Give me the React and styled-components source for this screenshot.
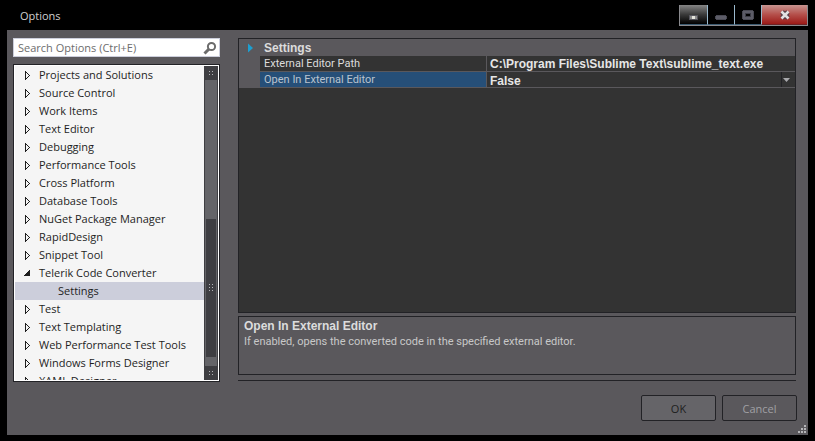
import React, { useState } from "react";
import styled, { createGlobalStyle } from "styled-components";

const items = [
  "Projects and Solutions",
  "Source Control",
  "Work Items",
  "Text Editor",
  "Debugging",
  "Performance Tools",
  "Cross Platform",
  "Database Tools",
  "NuGet Package Manager",
  "RapidDesign",
  "Snippet Tool",
  "Telerik Code Converter",
  "Settings",
  "Test",
  "Text Templating",
  "Web Performance Test Tools",
  "Windows Forms Designer",
  "XAML Designer"
];

const OPENED = "Telerik Code Converter";
const CHILD = "Settings";

const Arrow = ({ open }) => (
  <svg width="8" height="9" fill="#1e1e1e" shapeRendering="crispEdges">
    {open ? (
      <path d="M5 1h1v6h-6v-1h1v-1h1v-1h1v-1h1v-1h1z" />
    ) : (
      <path d="M1 0h1v9h-1zM2 1h1v1h-1zM3 2h1v1h-1zM4 3h1v1h-1zM5 4h1v1h-1zM4 5h1v1h-1zM3 6h1v1h-1zM2 7h1v1h-1z" />
    )}
  </svg>
);

const Dots = ({ rows = 2 }) => (
  <svg width="4" height={rows * 3 - 1} shapeRendering="crispEdges">
    {[...Array(rows)].map((_, i) => (
      <g key={i} fill="#b4b4b8">
        <rect x="0" y={i * 3} width="1" height="1" />
        <rect x="3" y={i * 3} width="1" height="1" />
      </g>
    ))}
  </svg>
);

const App = () => {
  const [search, setSearch] = useState("");
  const [selected, setSelected] = useState(CHILD);
  const [path, setPath] = useState(
    "C:\\Program Files\\Sublime Text\\sublime_text.exe"
  );
  const [external, setExternal] = useState("False");

  return (
    <Window>
      <GlobalStyle />
      <TitleBar>
        <Title>Options</Title>
        <Caption>
          <CaptionBtn kind="tray" aria-label="Tray">
            <svg width="9" height="5" shapeRendering="crispEdges">
              <rect width="9" height="5" fill="#55555c" />
              <rect x="1" y="1" width="7" height="3" fill="#8d8d8d" />
              <rect x="3" y="1" width="3" height="3" fill="#e4e4dc" />
            </svg>
          </CaptionBtn>
          <CaptionBtn aria-label="Minimize">
            <svg width="12" height="5" shapeRendering="crispEdges">
              <path d="M1 0H11V1H12V4H11V5H1V4H0V1H1Z" fill="#494953" />
              <rect x="1" y="1" width="10" height="3" fill="#5c5c67" />
            </svg>
          </CaptionBtn>
          <CaptionBtn aria-label="Maximize">
            <svg width="12" height="10" shapeRendering="crispEdges">
              <path d="M1 0H11V1H12V9H11V10H1V9H0V1H1Z" fill="#494953" />
              <rect x="1" y="1" width="10" height="8" fill="#5c5c67" />
              <rect x="3" y="3" width="6" height="4" fill="#3c3c46" />
              <rect x="4" y="4" width="4" height="2" fill="#000" />
            </svg>
          </CaptionBtn>
          <CaptionBtn kind="close" aria-label="Close">
            <svg width="12" height="10" viewBox="0 0 12 10">
              <path d="M3 2L9 8M9 2L3 8" stroke="#4f3d45" strokeWidth="5" />
              <path
                d="M2.5 1.5L9.5 8.5M9.5 1.5L2.5 8.5"
                stroke="#e2e2e2"
                strokeWidth="2.6"
              />
            </svg>
          </CaptionBtn>
        </Caption>
      </TitleBar>

      <Body>
        <Main>
          <Side>
            <SearchBox>
              <SearchInput
                aria-label="Search Options"
                placeholder="Search Options (Ctrl+E)"
                value={search}
                onChange={(e) => setSearch(e.target.value)}
              />
              <svg width="14" height="14" fill="none" stroke="#6c6c6c">
                <circle cx="8.5" cy="5.5" r="3.6" strokeWidth="2" />
                <path d="M6 8L1.5 12.5" strokeWidth="3" />
              </svg>
            </SearchBox>
            <Tree>
              <TreeList>
                {items.map((name) => (
                  <li key={name}>
                    <TreeItem
                      $child={name === CHILD}
                      $selected={name === selected}
                      onClick={() => setSelected(name)}
                    >
                      {name !== CHILD && <Arrow open={name === OPENED} />}
                      <span>{name}</span>
                    </TreeItem>
                  </li>
                ))}
              </TreeList>
              <ScrollBar>
                <ScrollEnd>
                  <Dots />
                </ScrollEnd>
                <Track>
                  <Thumb>
                    <Dots rows={3} />
                  </Thumb>
                </Track>
                <ScrollEnd>
                  <Dots />
                </ScrollEnd>
              </ScrollBar>
            </Tree>
          </Side>

          <Content>
            <Grid>
              <Category>
                <svg width="5" height="10" viewBox="0 0 5 10">
                  <path d="M0 0.5L5 5L0 9.5Z" fill="#1d9fd0" />
                </svg>
                <span>Settings</span>
              </Category>
              <Row>
                <Name htmlFor="path">External Editor Path</Name>
                <Value>
                  <ValueInput
                    id="path"
                    value={path}
                    onChange={(e) => setPath(e.target.value)}
                  />
                </Value>
              </Row>
              <Row>
                <Name htmlFor="external" $active>
                  Open In External Editor
                </Name>
                <Value>
                  <ValueSelect
                    id="external"
                    value={external}
                    onChange={(e) => setExternal(e.target.value)}
                  >
                    <option>False</option>
                    <option>True</option>
                  </ValueSelect>
                  <DropMark>
                    <svg width="7" height="4" viewBox="0 0 7 4">
                      <path d="M0 0H7L3.5 4Z" fill="#a9a9ad" />
                    </svg>
                  </DropMark>
                </Value>
              </Row>
            </Grid>
            <Help>
              <HelpTitle>Open In External Editor</HelpTitle>
              <HelpText>
                If enabled, opens the converted code in the specified external
                editor.
              </HelpText>
            </Help>
            <Line />
          </Content>
        </Main>

        <Footer>
          <Button $primary>OK</Button>
          <Button>Cancel</Button>
        </Footer>
        <Grip width="8" height="8" shapeRendering="crispEdges" fill="#b5b5b8">
          <path d="M6 0h2v2h-2zM3 3h2v2h-2zM6 3h2v2h-2zM0 6h2v2h-2zM3 6h2v2h-2zM6 6h2v2h-2z" />
        </Grip>
      </Body>
    </Window>
  );
};

export default App;

const GlobalStyle = createGlobalStyle`
  * {
    box-sizing: border-box;
  }
  body {
    margin: 0;
    background: #000;
    font-family: "Open Sans", sans-serif;
    font-size: 11px;
  }
  button, input, select {
    font: inherit;
    color: inherit;
    margin: 0;
    padding: 0;
    border: 0;
    border-radius: 0;
    outline: 0;
    background: none;
  }
  svg {
    display: block;
    flex: none;
  }
`;

const Window = styled.div`
  display: flex;
  flex-direction: column;
  height: 100vh;
  padding: 0 7px 6px;
`;

const TitleBar = styled.header`
  display: flex;
  justify-content: space-between;
  height: 30px;
  padding-left: 13px;
`;

const Title = styled.h1`
  margin: 0;
  padding-top: 2px;
  font-size: 11px;
  font-weight: 400;
  line-height: 28px;
  color: #d0d0d0;
`;

const Caption = styled.div`
  display: flex;
  height: 21px;
  margin-top: 5px;
  border: 1px solid #8a8a8e;
  border-top: 0;
`;

const CaptionBtn = styled.button`
  display: flex;
  justify-content: center;
  align-items: flex-end;
  width: ${(props) => (props.kind === "close" ? "46px" : "27px")};
  padding-bottom: 4px;
  border-bottom: 1px solid #3b5a70;
  background: ${(props) =>
    props.kind === "tray"
      ? "linear-gradient(#858585, #3a3a3a 50%, #000)"
      : props.kind === "close"
      ? "linear-gradient(#c89490, #b5504b 50%, #9c1a17)"
      : "#000"};
  ${(props) => props.kind === "close" && "border-color: #6d2224;"}
  & + & {
    border-left: 1px solid #9ab8cc;
  }
`;

const Body = styled.main`
  position: relative;
  display: flex;
  flex: 1;
  flex-direction: column;
  min-height: 0;
  padding: 8px 11px 14px 6px;
  background: #5a585c;
`;

const Main = styled.div`
  display: flex;
  flex: 1;
  gap: 18px;
  min-height: 0;
`;

const Side = styled.div`
  display: flex;
  flex-direction: column;
  gap: 7px;
  width: 207px;
`;

const SearchBox = styled.div`
  display: flex;
  align-items: center;
  height: 19px;
  padding: 0 2px 0 4px;
  border: 1px solid #cccedb;
  background: #fff;
`;

const SearchInput = styled.input`
  flex: 1;
  min-width: 0;
  height: 17px;
  color: #1e1e1e;
  &::placeholder {
    color: #6d6d6d;
    opacity: 1;
  }
`;

const Tree = styled.div`
  display: flex;
  flex: 1;
  min-height: 0;
  padding: 1px;
  border: 1px solid #222226;
  background: #fff;
`;

const TreeList = styled.ul`
  flex: 1;
  margin: 0;
  padding: 0;
  overflow: hidden;
  list-style: none;
  background: #f5f5f5;
`;

const TreeItem = styled.button`
  display: flex;
  align-items: center;
  gap: 7px;
  width: 100%;
  height: 18px;
  padding-left: ${(props) => (props.$child ? "43px" : "9px")};
  color: #1e1e1e;
  line-height: 18px;
  white-space: nowrap;
  background: ${(props) => (props.$selected ? "#cccedb" : "transparent")};
`;

const ScrollBar = styled.div`
  display: flex;
  flex-direction: column;
  width: 14px;
  background: #3e3e42;
`;

const ScrollEnd = styled.div`
  display: flex;
  align-items: center;
  justify-content: center;
  height: 14px;
`;

const Track = styled.div`
  display: flex;
  flex: 1;
  flex-direction: column;
  justify-content: flex-end;
  margin: 0 1px;
  padding: 0 1px 9px;
  background: #646468;
`;

const Thumb = styled.div`
  display: flex;
  align-items: center;
  justify-content: center;
  height: 50%;
  background: #3e3e42;
`;

const Content = styled.div`
  display: flex;
  flex: 1;
  flex-direction: column;
  min-width: 0;
  padding-right: 1px;
  font-family: "Liberation Sans", Arial, sans-serif;
`;

const Grid = styled.section`
  flex: 1;
  border: 1px solid #222226;
  background: #333;
`;

const Category = styled.div`
  display: flex;
  align-items: center;
  gap: 11px;
  height: 17px;
  padding-left: 9px;
  font-size: 12px;
  font-weight: 700;
  color: #dcdcdc;
  background: #5a585c;
`;

const Row = styled.div`
  display: grid;
  grid-template-columns: 226fr 309fr;
  height: 16px;
  padding-left: 21px;
  border-bottom: 1px solid #5a585c;
  background: linear-gradient(90deg, #5a585c 21px, #333 21px);
  line-height: 16px;
`;

const Name = styled.label`
  height: 15px;
  padding-left: 4px;
  font-family: Roboto, sans-serif;
  font-size: 11px;
  color: ${(props) => (props.$active ? "#b9c3cf" : "#dcdcdc")};
  background: ${(props) => (props.$active ? "#264f78" : "transparent")};
`;

const Value = styled.div`
  display: flex;
  min-width: 0;
  padding-left: 3px;
  border-left: 1px solid #5a585c;
  font-size: 12px;
  font-weight: 700;
  color: #e6e6e6;
`;

const ValueInput = styled.input`
  width: 100%;
  height: 15px;
  padding-top: 1px;
`;

const ValueSelect = styled.select`
  flex: 1;
  height: 15px;
  padding-top: 1px;
  appearance: none;
`;

const DropMark = styled.span`
  display: flex;
  align-items: center;
  justify-content: center;
  width: 14px;
  padding-right: 4px;
  border-left: 1px solid #222226;
  pointer-events: none;
`;

const Help = styled.section`
  height: 59px;
  margin-top: 3px;
  padding: 2px 5px;
  border: 1px solid #222226;
`;

const HelpTitle = styled.h2`
  margin: 0;
  font-size: 12px;
  line-height: 15px;
  color: #dcdcdc;
`;

const HelpText = styled.p`
  margin: 0;
  font-family: Roboto, sans-serif;
  font-size: 11px;
  line-height: 15px;
  color: #c8c8c8;
`;

const Line = styled.hr`
  width: 100%;
  height: 1px;
  margin: 5px 0 1px;
  border: 0;
  background: #222226;
`;

const Footer = styled.footer`
  display: flex;
  justify-content: flex-end;
  gap: 6px;
  padding-top: 13px;
`;

const Button = styled.button`
  width: 75px;
  height: 26px;
  border: 1px solid #222226;
  border-radius: 2px;
  color: ${(props) => (props.$primary ? "#1e1e1e" : "#a0a0a4")};
  background: ${(props) => (props.$primary ? "#656468" : "transparent")};
`;

const Grip = styled.svg`
  position: absolute;
  right: 2px;
  bottom: 2px;
`;
